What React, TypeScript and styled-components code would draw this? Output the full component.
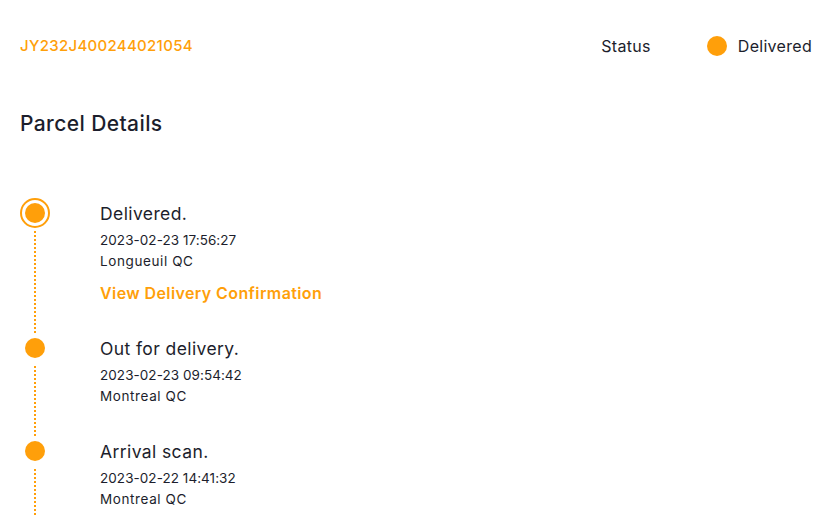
import React from "react";
import styled, { createGlobalStyle } from "styled-components";

const ORANGE = "#ff9f0a";
const TEXT = "#1c1e2c";

const Global = createGlobalStyle`
  html, body { margin: 0; padding: 0; background: #ffffff; }
  body { font-family: Inter, "Open Sans", sans-serif; color: ${TEXT}; }
`;

const Page = styled.div`
  padding: 34px 4px 0 20px;
  overflow: hidden;
  height: 516px;
  box-sizing: border-box;
`;

const Header = styled.div`
  display: flex;
  align-items: center;
  justify-content: space-between;
  height: 24px;
`;

const Tracking = styled.div`
  color: ${ORANGE};
  font-size: 15px;
  font-weight: 500;
  line-height: 24px;
  letter-spacing: 0.3px;
`;

const StatusGroup = styled.div`
  display: flex;
  align-items: center;
`;

const StatusText = styled.span`
  font-size: 16px;
  line-height: 24px;
  letter-spacing: 0.3px;
`;

const StatusLabel = styled(StatusText)`
  margin-right: 56px;
`;

const StatusValue = styled(StatusText)`
  margin-left: 11px;
`;

const Dot = styled.span<{ $size: number }>`
  display: block;
  width: ${(p) => p.$size}px;
  height: ${(p) => p.$size}px;
  border-radius: 50%;
  background: ${ORANGE};
  flex-shrink: 0;
`;

const Title = styled.h2`
  margin: 51px 0 0;
  font-size: 21px;
  font-weight: 500;
  line-height: 30px;
  letter-spacing: 0.4px;
`;

const Timeline = styled.div`
  margin-top: 59px;
  display: flex;
  flex-direction: column;
`;

const Item = styled.div`
  display: flex;
  align-items: stretch;
`;

const Rail = styled.div`
  width: 30px;
  display: flex;
  flex-direction: column;
  align-items: center;
  flex-shrink: 0;
`;

const MarkerBox = styled.div`
  width: 30px;
  height: 30px;
  display: flex;
  align-items: center;
  justify-content: center;
  flex-shrink: 0;
`;

const Ring = styled.div`
  width: 30px;
  height: 30px;
  box-sizing: border-box;
  border: 2px solid ${ORANGE};
  border-radius: 50%;
  display: flex;
  align-items: center;
  justify-content: center;
`;

const Line = styled.div`
  flex: 1;
  margin-top: 3px;
  border-left: 2px dotted ${ORANGE};
`;

const Content = styled.div`
  margin-left: 50px;
  padding: 5px 0 29px;
`;

const EventTitle = styled.div`
  font-size: 17.5px;
  line-height: 22px;
  letter-spacing: 0.4px;
`;

const Meta = styled.div<{ $spacing: number; $gap?: number }>`
  font-size: 13.5px;
  line-height: 21px;
  letter-spacing: ${(p) => p.$spacing}px;
  margin-top: ${(p) => p.$gap ?? 0}px;
`;

const Link = styled.a`
  display: block;
  margin-top: 10px;
  color: ${ORANGE};
  font-size: 16px;
  font-weight: 600;
  line-height: 22px;
  letter-spacing: 0.4px;
  text-decoration: none;
  cursor: pointer;
`;

const events = [
  { title: "Delivered.", date: "2023-02-23 17:56:27", place: "Longueuil QC", current: true },
  { title: "Out for delivery.", date: "2023-02-23 09:54:42", place: "Montreal QC" },
  { title: "Arrival scan.", date: "2023-02-22 14:41:32", place: "Montreal QC" },
];

export default function App() {
  return (
    <>
      <Global />
      <Page>
        <Header>
          <Tracking>JY232J400244021054</Tracking>
          <StatusGroup>
            <StatusLabel>Status</StatusLabel>
            <Dot $size={20} />
            <StatusValue>Delivered</StatusValue>
          </StatusGroup>
        </Header>
        <Title>Parcel Details</Title>
        <Timeline>
          {events.map((e) => (
            <Item key={e.title}>
              <Rail>
                <MarkerBox>
                  {e.current ? (
                    <Ring>
                      <Dot $size={20} />
                    </Ring>
                  ) : (
                    <Dot $size={20} />
                  )}
                </MarkerBox>
                <Line />
              </Rail>
              <Content>
                <EventTitle>{e.title}</EventTitle>
                <Meta $spacing={0.05} $gap={5}>{e.date}</Meta>
                <Meta $spacing={0.6}>{e.place}</Meta>
                {e.current && <Link>View Delivery Confirmation</Link>}
              </Content>
            </Item>
          ))}
        </Timeline>
      </Page>
    </>
  );
}
